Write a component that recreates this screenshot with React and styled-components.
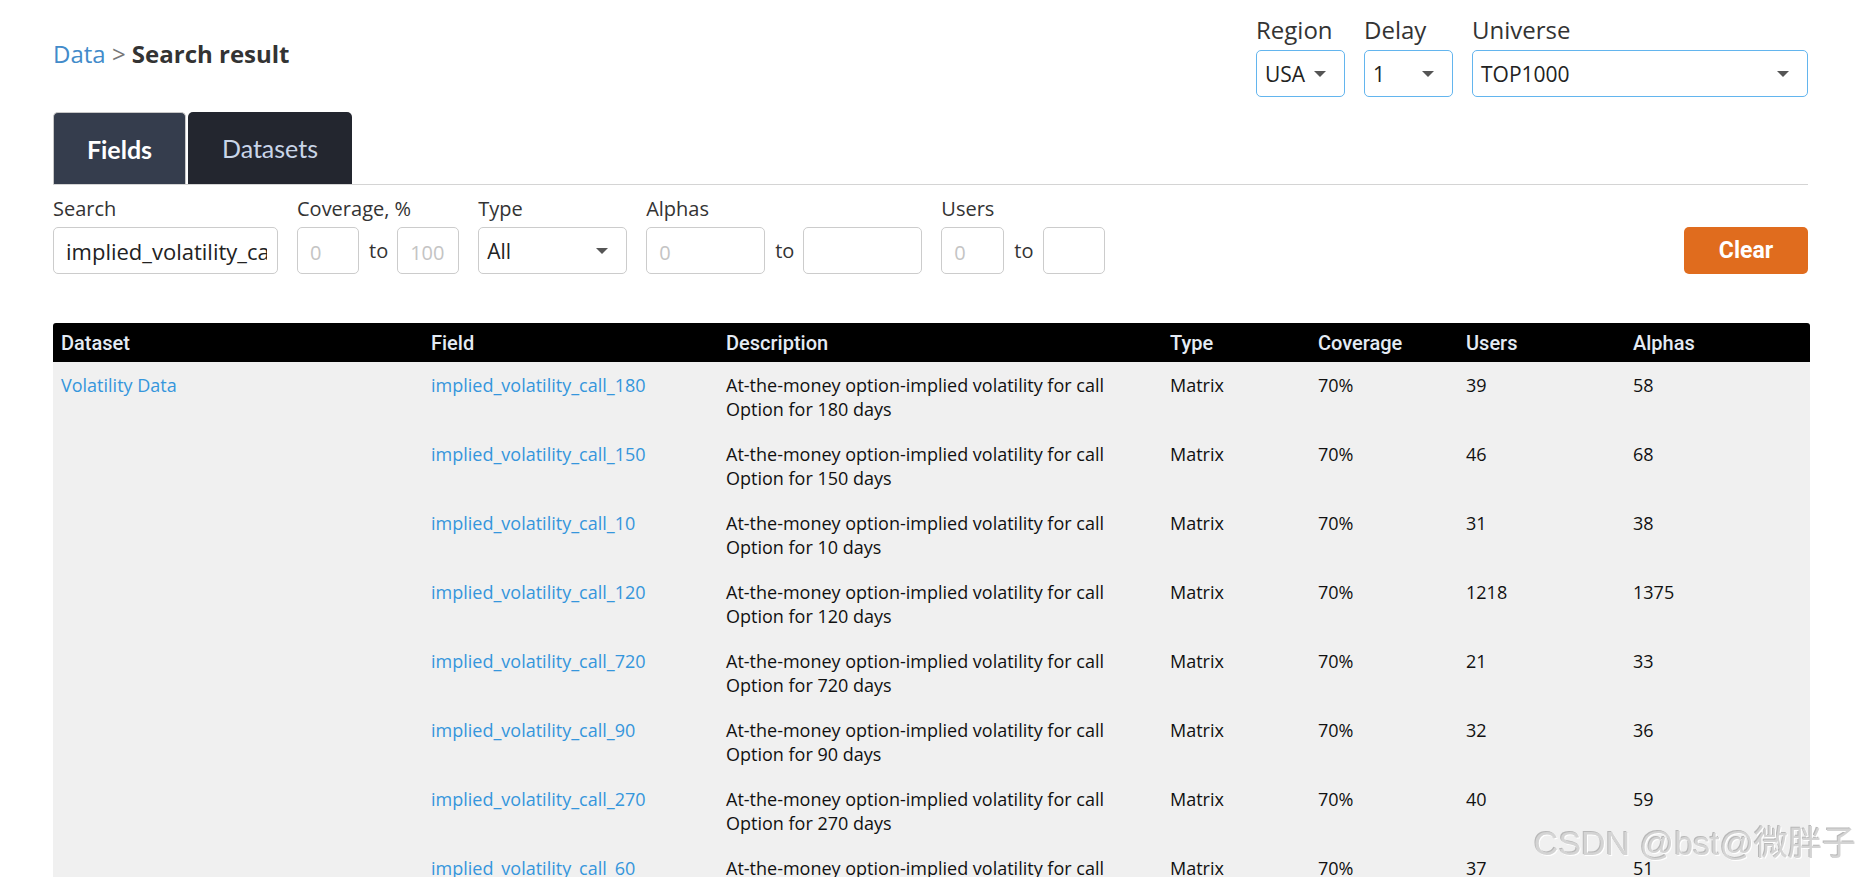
import React from "react";
import styled, { createGlobalStyle } from "styled-components";

const GlobalStyle = createGlobalStyle`
  html, body {
    margin: 0;
    padding: 0;
    background: #fff;
    font-family: "Open Sans", "Noto Sans", sans-serif;
    color: #222;
  }
`;

const Page = styled.div`
  padding: 15px 50px 0 53px;
`;

const TopBar = styled.div`
  display: flex;
  justify-content: space-between;
  align-items: flex-start;
`;

const Breadcrumb = styled.div`
  margin-top: 24px;
  font-size: 24px;
  line-height: 30px;
  color: #777;
`;

const CrumbLink = styled.a`
  color: #428bca;
  text-decoration: none;
`;

const CrumbCurrent = styled.span`
  color: #333;
  font-weight: 700;
`;

const Selectors = styled.div`
  display: flex;
  gap: 19px;
`;

const SelectorGroup = styled.div`
  display: flex;
  flex-direction: column;
  gap: 5px;
`;

const TopLabel = styled.div`
  font-size: 24px;
  line-height: 30px;
  color: #333;
`;

const Select = styled.div`
  box-sizing: border-box;
  width: ${(p) => p.width}px;
  height: 47px;
  display: flex;
  align-items: center;
  justify-content: space-between;
  padding: 0 18px 0 8px;
  border: 1px solid ${(p) => (p.accent ? "#63b5ee" : "#ccc")};
  border-radius: 5px;
  background: #fff;
  font-size: 21px;
  color: #222;
`;

const Caret = styled.span`
  width: 0;
  height: 0;
  border-left: 6px solid transparent;
  border-right: 6px solid transparent;
  border-top: 6px solid #555;
`;

const Tabs = styled.div`
  margin-top: 15px;
  display: flex;
  gap: 2px;
  border-bottom: 1px solid #d4d4d4;
`;

const Tab = styled.div`
  box-sizing: border-box;
  width: ${(p) => p.width}px;
  height: 72px;
  display: flex;
  align-items: center;
  justify-content: center;
  border-radius: 5px 5px 0 0;
  font-family: Lato, "Open Sans", sans-serif;
  font-size: 25px;
  font-weight: ${(p) => (p.active ? 700 : 400)};
  color: ${(p) => (p.active ? "#fff" : "#c9d5e8")};
  background: ${(p) => (p.active ? "#353d4d" : "#23262f")};
  border: ${(p) => (p.active ? "1px solid #c8c8c8" : "none")};
  border-bottom: none;
`;

const Filters = styled.div`
  display: flex;
  align-items: flex-end;
  gap: 19px;
  padding-top: 11px;
`;

const FilterGroup = styled.div`
  display: flex;
  flex-direction: column;
  gap: 5px;
`;

const FilterLabel = styled.div`
  font-size: 20px;
  line-height: 26px;
  color: #333;
`;

const Range = styled.div`
  display: flex;
  align-items: center;
`;

const To = styled.span`
  margin: 0 9px 0 10px;
  font-size: 20px;
  color: #333;
`;

const Input = styled.input`
  box-sizing: border-box;
  width: ${(p) => p.width}px;
  height: 47px;
  padding: 0 10px 0 12px;
  border: 1px solid #ccc;
  border-radius: 5px;
  font-family: "Open Sans", sans-serif;
  font-size: 22px;
  color: #222;
  outline: none;

  &::placeholder {
    color: #c4c4c4;
    font-size: 20px;
  }
`;

const ClearButton = styled.button`
  margin-left: auto;
  width: 124px;
  height: 47px;
  border: none;
  border-radius: 5px;
  background: #e06c1e;
  color: #fff;
  font-family: Roboto, sans-serif;
  font-weight: 700;
  font-size: 23px;
  cursor: pointer;
`;

const Table = styled.table`
  margin-top: 49px;
  width: 100%;
  table-layout: fixed;
  border-collapse: collapse;
  font-size: 18px;
  line-height: 24px;
`;

const HeadCell = styled.th`
  height: 39px;
  padding: 0 8px;
  text-align: left;
  vertical-align: middle;
  background: #000;
  color: #e4ebf4;
  font-family: Roboto, sans-serif;
  font-weight: 500;
  font-size: 20px;
  &:first-child { border-top-left-radius: 3px; }
  &:last-child { border-top-right-radius: 3px; }
`;

const Row = styled.tr`
  background: #f0f0f0;
`;

const Cell = styled.td`
  padding: 11px 8px 10px;
  vertical-align: top;
  color: #111;
`;

const Link = styled.a`
  color: #3596dc;
  text-decoration: none;
`;

const Watermark = styled.div`
  position: fixed;
  right: 2px;
  bottom: 12px;
  font-family: "Liberation Sans", "Noto Sans CJK SC", sans-serif;
  font-size: 34px;
  color: #d4d4d4;
  text-shadow: 1px 1px 0 #fff, -1px -1px 0 #b8b8b8;
  pointer-events: none;
`;

const columns = [
  { name: "Dataset", width: 370 },
  { name: "Field", width: 295 },
  { name: "Description", width: 444 },
  { name: "Type", width: 148 },
  { name: "Coverage", width: 148 },
  { name: "Users", width: 167 },
  { name: "Alphas", width: 185 },
];

const rows = [
  { days: 180, users: 39, alphas: 58 },
  { days: 150, users: 46, alphas: 68 },
  { days: 10, users: 31, alphas: 38 },
  { days: 120, users: 1218, alphas: 1375 },
  { days: 720, users: 21, alphas: 33 },
  { days: 90, users: 32, alphas: 36 },
  { days: 270, users: 40, alphas: 59 },
  { days: 60, users: 37, alphas: 51 },
];

export default function App() {
  return (
    <Page>
      <GlobalStyle />
      <TopBar>
        <Breadcrumb>
          <CrumbLink href="#">Data</CrumbLink> &gt; <CrumbCurrent>Search result</CrumbCurrent>
        </Breadcrumb>
        <Selectors>
          <SelectorGroup>
            <TopLabel>Region</TopLabel>
            <Select accent width={89}>USA <Caret /></Select>
          </SelectorGroup>
          <SelectorGroup>
            <TopLabel>Delay</TopLabel>
            <Select accent width={89}>1 <Caret /></Select>
          </SelectorGroup>
          <SelectorGroup>
            <TopLabel>Universe</TopLabel>
            <Select accent width={336}>TOP1000 <Caret /></Select>
          </SelectorGroup>
        </Selectors>
      </TopBar>

      <Tabs>
        <Tab active width={133}>Fields</Tab>
        <Tab width={164}>Datasets</Tab>
      </Tabs>

      <Filters>
        <FilterGroup>
          <FilterLabel>Search</FilterLabel>
          <Input width={225} defaultValue="implied_volatility_call" />
        </FilterGroup>
        <FilterGroup>
          <FilterLabel>Coverage, %</FilterLabel>
          <Range>
            <Input width={62} placeholder="0" />
            <To>to</To>
            <Input width={62} placeholder="100" />
          </Range>
        </FilterGroup>
        <FilterGroup>
          <FilterLabel>Type</FilterLabel>
          <Select width={149}>All <Caret /></Select>
        </FilterGroup>
        <FilterGroup>
          <FilterLabel>Alphas</FilterLabel>
          <Range>
            <Input width={119} placeholder="0" />
            <To>to</To>
            <Input width={119} />
          </Range>
        </FilterGroup>
        <FilterGroup>
          <FilterLabel>Users</FilterLabel>
          <Range>
            <Input width={63} placeholder="0" />
            <To>to</To>
            <Input width={62} />
          </Range>
        </FilterGroup>
        <ClearButton>Clear</ClearButton>
      </Filters>

      <Table>
        <colgroup>
          {columns.map((c) => (
            <col key={c.name} style={{ width: c.width }} />
          ))}
        </colgroup>
        <thead>
          <tr>
            {columns.map((c) => (
              <HeadCell key={c.name}>{c.name}</HeadCell>
            ))}
          </tr>
        </thead>
        <tbody>
          {rows.map((r, idx) => (
            <Row key={r.days}>
              <Cell>{idx === 0 && <Link href="#">Volatility Data</Link>}</Cell>
              <Cell><Link href="#">implied_volatility_call_{r.days}</Link></Cell>
              <Cell>
                At-the-money option-implied volatility for call
                <br />
                Option for {r.days} days
              </Cell>
              <Cell>Matrix</Cell>
              <Cell>70%</Cell>
              <Cell>{r.users}</Cell>
              <Cell>{r.alphas}</Cell>
            </Row>
          ))}
        </tbody>
      </Table>

      <Watermark>CSDN @bst@微胖子</Watermark>
    </Page>
  );
}
